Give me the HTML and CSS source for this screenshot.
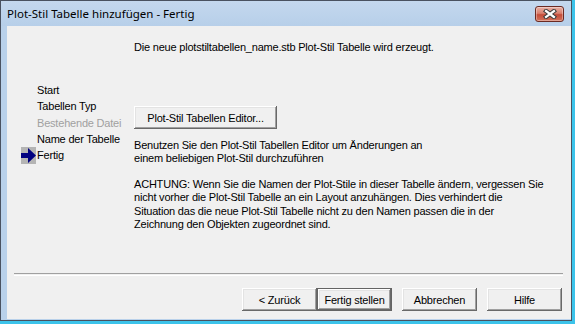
FILE: index.html
```html
<!DOCTYPE html>
<html lang="de">
<head>
  <meta charset="UTF-8" />
  <title>Plot-Stil Tabelle hinzufügen - Fertig</title>
  <link rel="stylesheet" href="styles.css">
</head>
<body>

  <div class="window">
    <div class="titlebar">
      <span class="title">Plot-Stil Tabelle hinzufügen - Fertig</span>
      <button class="close-btn" aria-label="Schließen">
        <svg width="14" height="10" viewBox="0 0 14 10">
          <path d="M3 2 L11 8 M11 2 L3 8" stroke="#3b3b3b" stroke-width="4.2" stroke-linecap="square" fill="none"/>
          <path d="M3 2 L11 8 M11 2 L3 8" stroke="#fff" stroke-width="2.2" stroke-linecap="square" fill="none"/>
        </svg>
      </button>
    </div>

    <div class="client">
      <div class="content">
        <ul class="steps">
          <li><span class="marker"></span>Start</li>
          <li><span class="marker"></span>Tabellen Typ</li>
          <li class="disabled"><span class="marker"></span>Bestehende Datei</li>
          <li><span class="marker"></span>Name der Tabelle</li>
          <li class="current">
            <span class="marker">
              <svg width="15" height="17" viewBox="0 0 15 17">
                <path d="M0 6 H7 V1 L15 8.5 L7 16 V11 H0 Z" fill="#000080"/>
              </svg>
            </span>Fertig
          </li>
        </ul>

        <div class="main">
          <p class="intro">Die neue plotstiltabellen_name.stb Plot-Stil Tabelle wird erzeugt.</p>
          <button class="btn editor-btn">Plot-Stil Tabellen Editor...</button>
          <p class="hint">Benutzen Sie den Plot-Stil Tabellen Editor um Änderungen an<br>einem beliebigen Plot-Stil durchzuführen</p>
          <p class="warning">ACHTUNG: Wenn Sie die Namen der Plot-Stile in dieser Tabelle ändern, vergessen Sie<br>nicht vorher die Plot-Stil Tabelle an ein Layout anzuhängen. Dies verhindert die<br>Situation das die neue Plot-Stil Tabelle nicht zu den Namen passen die in der<br>Zeichnung den Objekten zugeordnet sind.</p>
        </div>
      </div>

      <div class="footer">
        <div class="separator"></div>
        <div class="actions">
          <button class="btn">&lt; Zurück</button>
          <button class="btn default">Fertig stellen</button>
          <button class="btn spaced">Abbrechen</button>
          <button class="btn spaced">Hilfe</button>
        </div>
      </div>
    </div>
  </div>

</body>
</html>
```

FILE: styles.css
```css
body {
  margin: 0;
  padding: 0;
  background-color: #3cc3ea;
  font-family: "Liberation Sans", Arial, sans-serif;
  font-size: 11px;
  letter-spacing: -0.2px;
  color: #000;
}

.window {
  width: 572px;
  height: 321px;
  box-sizing: border-box;
  border: 1px solid #4a5260;
  background: linear-gradient(to right, #b9d1ea, #bcd3ec);
  display: flex;
  flex-direction: column;
}

.titlebar {
  height: 25px;
  display: flex;
  align-items: center;
  justify-content: space-between;
  padding-left: 6px;
  background: linear-gradient(#c4d8ee, #b7cfe9);
}

.title {
  font-family: "Noto Sans", sans-serif;
  font-size: 11.5px;
  letter-spacing: 0;
  color: #000;
  margin-top: -1px;
}

.close-btn {
  width: 29px;
  height: 16px;
  margin-right: 7px;
  padding: 0;
  border: 1px solid #6b2a22;
  border-radius: 3px;
  background: linear-gradient(#e8b0a4 0%, #d9806f 45%, #c44c39 55%, #d2735c 100%);
  box-shadow: inset 0 0 0 1px rgba(255, 255, 255, 0.35);
  display: flex;
  align-items: center;
  justify-content: center;
}

.client {
  flex: 1;
  margin: 0 0 1px 6px;
  background-color: #f0f0f0;
  display: flex;
  flex-direction: column;
}

.content {
  flex: 1;
  display: flex;
}

.steps {
  width: 113px;
  margin: 0;
  padding: 56px 0 0 14px;
  list-style: none;
}

.steps li {
  display: flex;
  align-items: center;
  height: 16.25px;
  white-space: nowrap;
}

.steps .marker {
  width: 16px;
  height: 17px;
  flex-shrink: 0;
}

.steps .current .marker {
  width: 15px;
  margin-right: 1px;
  background-color: #b4b4b4;
}

.steps .current .marker svg {
  display: block;
}

.steps .disabled {
  color: #a0a0a0;
}

.main {
  padding-top: 15px;
}

.main p {
  margin: 0;
  line-height: 13px;
}

.intro {
  margin-bottom: 52px !important;
}

.hint {
  margin-top: 10px !important;
}

.warning {
  margin-top: 13px !important;
  line-height: 13.4px !important;
}

.btn {
  font-family: "Liberation Sans", Arial, sans-serif;
  font-size: 11px;
  letter-spacing: -0.2px;
  color: #000;
  width: 75px;
  height: 23px;
  padding: 0;
  border: none;
  background-color: #f0f0f0;
  box-shadow: inset -1px -1px #696969, inset 1px 1px #fff, inset -2px -2px #a0a0a0, inset 2px 2px #e3e3e3;
}

.editor-btn {
  width: 143px;
  height: 23px;
  display: block;
}

.btn.default {
  border: 1px solid #646464;
}

.footer {
  padding: 0 9px 8px 7px;
}

.separator {
  height: 1px;
  margin-right: -1px;
  border-top: 1px solid #a0a0a0;
  border-bottom: 1px solid #fff;
}

.actions {
  margin-top: 12px;
  display: flex;
  justify-content: flex-end;
}

.actions .spaced {
  margin-left: 10px;
}
```
